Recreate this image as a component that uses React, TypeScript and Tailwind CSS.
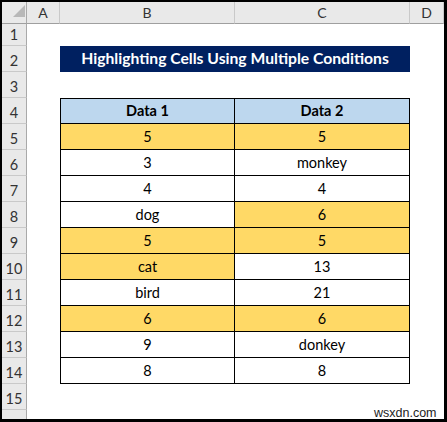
const FONT = "font-['Lato','Open_Sans',sans-serif]";

// [Data 1, Data 2, highlight B, highlight C]
const DATA: [string, string, boolean, boolean][] = [
  ["5", "5", true, true],
  ["3", "monkey", false, false],
  ["4", "4", false, false],
  ["dog", "6", false, true],
  ["5", "5", true, true],
  ["cat", "13", true, false],
  ["bird", "21", false, false],
  ["6", "6", true, true],
  ["9", "donkey", false, false],
  ["8", "8", false, false],
];

const GRID = "grid grid-cols-[25px_33px_175px_175px_1fr]";

function RowHead({ n }: { n: number }) {
  return (
    <div className="flex items-end justify-center border-r border-b border-r-[#a9a9a9] border-b-[#c9c9c9] bg-[#e9e9e9] pb-[1px] text-[14.5px] leading-[18px] text-[#333]">
      {n}
    </div>
  );
}

function TableCell({
  text,
  first,
  top,
  bg,
  bold,
}: {
  text: string;
  first?: boolean;
  top?: boolean;
  bg: string;
  bold?: boolean;
}) {
  return (
    <div
      className={`flex items-center justify-center border-r border-b border-black text-[14.5px] text-black ${bg} ${
        first ? "border-l" : ""
      } ${top ? "border-t" : ""} ${bold ? "font-bold" : ""}`}
    >
      {text}
    </div>
  );
}

export default function App() {
  return (
    <div
      className={`relative box-border flex h-[422px] w-[447px] flex-col overflow-hidden border-t-2 border-l-2 border-r-[3px] border-b-[3px] border-black bg-white ${FONT}`}
    >
      {/* column headers */}
      <div className={`${GRID} h-[18px] shrink-0`}>
        <div className="relative border-r border-b border-r-[#a9a9a9] border-b-[#9f9f9f] bg-[#e9e9e9]">
          <svg className="absolute left-[11px] top-[3px]" width="12" height="12" viewBox="0 0 12 12">
            <polygon points="12,0 12,12 0,12" fill="#b8b8b8" />
          </svg>
        </div>
        {["A", "B", "C", "D"].map((c) => (
          <div
            key={c}
            className="flex items-center justify-center border-r border-b border-r-[#c9c9c9] border-b-[#9f9f9f] bg-[#e9e9e9] text-[14px] text-[#333]"
          >
            {c}
          </div>
        ))}
      </div>

      {/* row 1 */}
      <div className={`${GRID} h-[26px] shrink-0`}>
        <RowHead n={1} />
      </div>

      {/* row 2: title */}
      <div className={`${GRID} h-[26px] shrink-0`}>
        <RowHead n={2} />
        <div />
        <div className="col-span-2 flex items-center justify-center bg-[#002060] text-[15.7px] font-bold text-white">
          Highlighting Cells Using Multiple Conditions
        </div>
      </div>

      {/* row 3 */}
      <div className={`${GRID} h-[26px] shrink-0`}>
        <RowHead n={3} />
      </div>

      {/* row 4: table header */}
      <div className={`${GRID} h-[26px] shrink-0`}>
        <RowHead n={4} />
        <div />
        <TableCell text="Data 1" first top bold bg="bg-[#bdd7ee]" />
        <TableCell text="Data 2" top bold bg="bg-[#bdd7ee]" />
      </div>

      {/* rows 5-14 */}
      {DATA.map(([b, c, hb, hc], i) => (
        <div key={i} className={`${GRID} h-[26px] shrink-0`}>
          <RowHead n={i + 5} />
          <div />
          <TableCell text={b} first bg={hb ? "bg-[#ffd966]" : "bg-white"} />
          <TableCell text={c} bg={hc ? "bg-[#ffd966]" : "bg-white"} />
        </div>
      ))}

      {/* row 15 */}
      <div className={`${GRID} h-[26px] shrink-0`}>
        <RowHead n={15} />
      </div>

      {/* row 16 (cut off) */}
      <div className={`${GRID} flex-1`}>
        <div className="border-r border-r-[#a9a9a9] bg-[#e9e9e9]" />
      </div>

      <span className="absolute left-[372px] top-[402px] font-['Liberation_Sans',Arial,sans-serif] text-[12.5px] text-[#222]">
        wsxdn.com
      </span>
    </div>
  );
}
